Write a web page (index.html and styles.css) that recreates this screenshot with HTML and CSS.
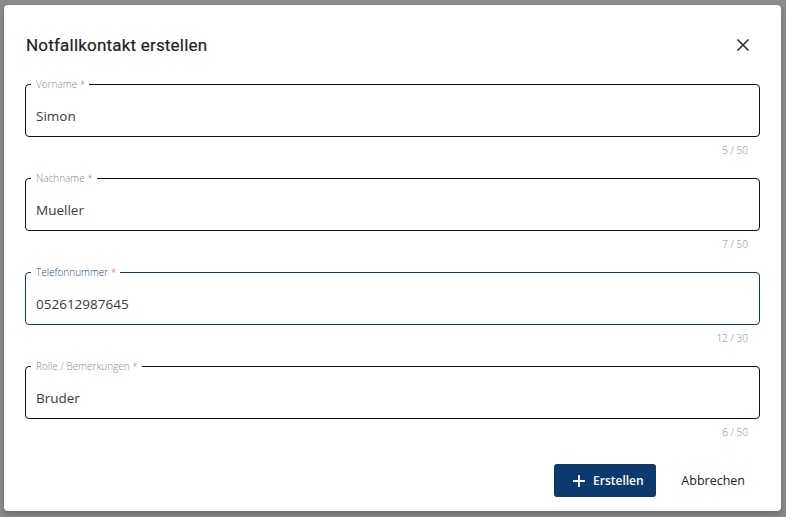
FILE: index.html
```html
<!DOCTYPE html>
<html lang="de">
<head>
<meta charset="utf-8">
<title>Notfallkontakt erstellen</title>
<link rel="stylesheet" href="styles.css">
</head>
<body>
<div class="backdrop">
  <div class="dialog">
    <div class="header">
      <h2 class="title">Notfallkontakt erstellen</h2>
      <button class="close" aria-label="Schließen">
        <svg width="20" height="20" viewBox="0 0 20 20"><path d="M4.5 4.5L15.5 15.5M15.5 4.5L4.5 15.5" stroke="#333" stroke-width="1.7" fill="none"/></svg>
      </button>
    </div>
    <div class="fields">
      <div class="group">
        <fieldset class="field">
          <legend class="label">Vorname *</legend>
          <div class="value">Simon</div>
        </fieldset>
        <div class="hint">5 / 50</div>
      </div>
      <div class="group">
        <fieldset class="field">
          <legend class="label">Nachname *</legend>
          <div class="value">Mueller</div>
        </fieldset>
        <div class="hint">7 / 50</div>
      </div>
      <div class="group">
        <fieldset class="field focused">
          <legend class="label">Telefonnummer <span class="req">*</span></legend>
          <div class="value">052612987645</div>
        </fieldset>
        <div class="hint">12 / 30</div>
      </div>
      <div class="group">
        <fieldset class="field">
          <legend class="label">Rolle / Bemerkungen *</legend>
          <div class="value">Bruder</div>
        </fieldset>
        <div class="hint">6 / 50</div>
      </div>
    </div>
    <div class="actions">
      <button class="primary">
        <svg width="14" height="14" viewBox="0 0 14 14"><path d="M7 1V13M1 7H13" stroke="#fff" stroke-width="1.8" fill="none"/></svg>
        <span>Erstellen</span>
      </button>
      <button class="text-btn">Abbrechen</button>
    </div>
  </div>
</div>
</body>
</html>
```

FILE: styles.css
```css
* { box-sizing: border-box; }
html, body { margin: 0; padding: 0; }
body {
  background: #8c8c8c;
  width: 786px;
  height: 517px;
  overflow: hidden;
  font-family: "Open Sans", "Noto Sans", sans-serif;
}
.backdrop {
  padding: 5px 5px 6px 4px;
}
.dialog {
  width: 777px;
  height: 506px;
  background: #fff;
  border-radius: 4px;
  box-shadow: 0 3px 6px rgba(0,0,0,0.25);
  display: flex;
  flex-direction: column;
}
.header {
  display: flex;
  justify-content: space-between;
  align-items: flex-start;
  padding: 32px 28px 0 22px;
  height: 56px;
}
.title {
  margin: 0;
  font-family: Roboto, "Noto Sans", sans-serif;
  font-weight: 400;
  font-size: 17px;
  line-height: 24px;
  letter-spacing: 0.2px;
  color: #222;
  margin-top: -4px;
  -webkit-text-stroke: 0.2px #222;
}
.close {
  border: 0;
  background: none;
  padding: 0;
  width: 20px;
  height: 20px;
  margin-top: -2px;
  display: flex;
}
.fields {
  display: flex;
  flex-direction: column;
  gap: 15px;
  padding: 17px 21px 0 21px;
}
.group {
  display: flex;
  flex-direction: column;
}
.field {
  margin: 0;
  border: 1px solid #111;
  border-radius: 4px;
  padding: 0 10px 10px 5px;
  min-width: 0;
}
.field.focused { border-color: #0d3b6e; }
.label {
  font-size: 10px;
  line-height: 12px;
  color: #8a8a8a;
  padding: 0 4px 0 5px;
  font-weight: 300;
}
.focused .label { color: #2a4f7e; }
.req { color: #e0603a; }
.value {
  padding: 16px 0 0 5px;
  font-size: 13.5px;
  line-height: 20px;
  color: #3a3a3a;
}
.hint {
  margin-top: 7px;
  text-align: right;
  padding-right: 12px;
  font-size: 10px;
  line-height: 13px;
  font-weight: 300;
  color: #8a8a8a;
}
.actions {
  display: flex;
  justify-content: flex-end;
  align-items: center;
  gap: 13px;
  padding: 25px 24px 0 0;
}
.primary {
  display: flex;
  align-items: center;
  justify-content: center;
  gap: 7px;
  width: 102px;
  height: 33px;
  border: 0;
  border-radius: 3px;
  background: #0b3a6f;
  color: #fff;
  font-family: "Open Sans", "Noto Sans", sans-serif;
  font-weight: 600;
  font-size: 12px;
  padding: 0 0 0 5px;
}
.text-btn {
  border: 0;
  background: none;
  height: 33px;
  padding: 0 12px;
  font-family: "Open Sans", "Noto Sans", sans-serif;
  font-size: 12.5px;
  color: #222;
}
```
